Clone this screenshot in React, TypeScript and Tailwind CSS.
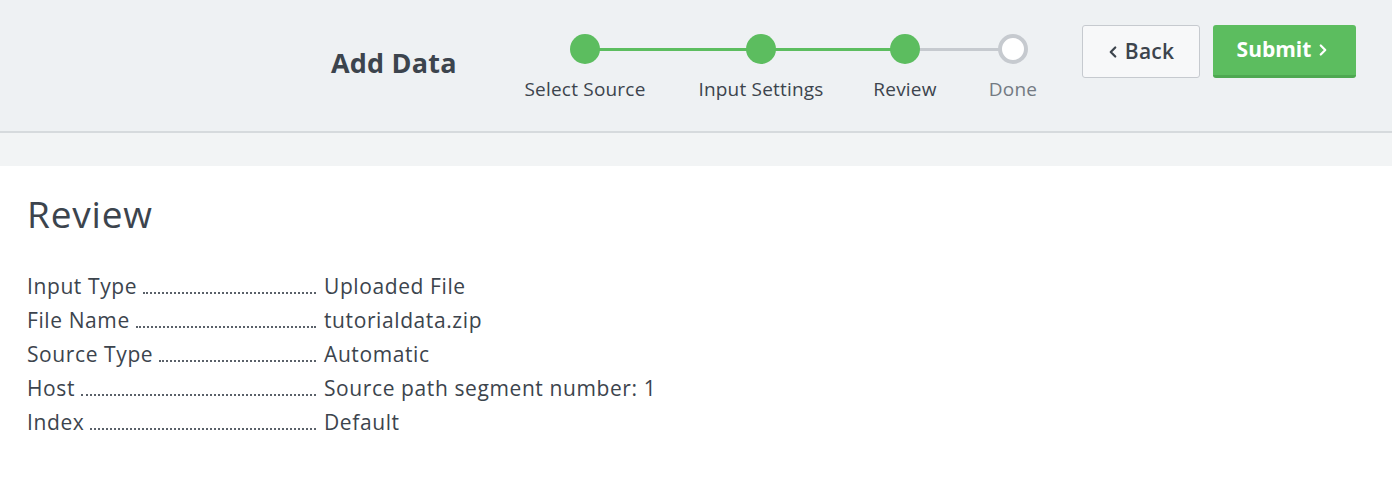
import { ChevronLeft, ChevronRight } from "lucide-react";

const steps = [
  { label: "Select Source", x: 585, done: true },
  { label: "Input Settings", x: 761, done: true },
  { label: "Review", x: 905, done: true },
  { label: "Done", x: 1013, done: false },
];

const rows = [
  ["Input Type", "Uploaded File"],
  ["File Name", "tutorialdata.zip"],
  ["Source Type", "Automatic"],
  ["Host", "Source path segment number: 1"],
  ["Index", "Default"],
];

function Stepper() {
  return (
    <div className="relative h-[100px] w-[557px]">
      {/* connecting lines */}
      <div className="absolute left-[60px] top-[22px] h-[3px] w-[320px] bg-[#5cbd5f]" />
      <div className="absolute left-[380px] top-[22px] h-[3px] w-[108px] bg-[#c6cacf]" />
      {steps.map((s) => (
        <div
          key={s.label}
          className="absolute top-[8px] flex w-[170px] -translate-x-1/2 flex-col items-center"
          style={{ left: s.x - 525 }}
        >
          {s.done ? (
            <div className="h-[30px] w-[30px] rounded-full bg-[#5cbd5f]" />
          ) : (
            <div className="h-[30px] w-[30px] rounded-full border-[4px] border-[#c6cacf] bg-white" />
          )}
          <span
            className={`mt-[12px] whitespace-nowrap text-[19px] leading-[26px] tracking-[0.2px] ${
              s.done ? "text-[#3c444d]" : "text-[#737a82]"
            }`}
          >
            {s.label}
          </span>
        </div>
      ))}
    </div>
  );
}

export default function App() {
  return (
    <div
      className="h-[496px] w-[1392px] overflow-hidden bg-white"
      style={{ fontFamily: "'Open Sans', Lato, sans-serif" }}
    >
      <header className="flex h-[133px] items-start border-b-[2px] border-[#d6dadd] bg-[#eef1f3] shadow-[0_1px_3px_rgba(0,0,0,0.08)]">
        <div className="ml-[331px] mt-[44px] w-[194px] shrink-0">
          <h1 className="whitespace-nowrap text-[27px] font-bold leading-[38px] tracking-[0.2px] text-[#3c444d]">
            Add Data
          </h1>
        </div>
        <div className="mt-[26px] shrink-0">
          <Stepper />
        </div>
        <div className="mt-[25px] flex gap-[13px]">
          <button className="flex h-[53px] w-[118px] items-center justify-center rounded-[3px] border border-[#c6cacf] bg-[#f7f8f9] text-[21px] font-semibold tracking-[0.2px] text-[#3c444d]">
            <ChevronLeft size={18} strokeWidth={3} className="-ml-1 mr-[3px]" />
            Back
          </button>
          <button className="flex h-[53px] w-[143px] items-center justify-center rounded-[3px] border-b-[3px] border-[#4ea851] bg-[#5cbd5f] text-[21px] font-bold text-white">
            Submit
            <ChevronRight size={18} strokeWidth={3} className="ml-[3px]" />
          </button>
        </div>
      </header>
      <div className="h-[33px] bg-[#f2f4f5]" />
      <main className="px-[27px] pt-[24px]">
        <h2 className="text-[37px] leading-[48px] tracking-[0.8px] text-[#3c444d]">Review</h2>
        <dl className="mt-[32px] flex flex-col">
          {rows.map(([k, v]) => (
            <div key={k} className="flex h-[34px] items-center text-[21px] tracking-[0.6px] text-[#3c444d]">
              {/* label with dot leader */}
              <dt className="flex w-[291px] shrink-0 items-baseline whitespace-nowrap">
                <span>{k}</span>
                <span className="ml-[6px] mr-[2px] flex-1 border-b-[2px] border-dotted border-[#5a6169]" />
              </dt>
              <dd className="ml-[6px] whitespace-nowrap">{v}</dd>
            </div>
          ))}
        </dl>
      </main>
    </div>
  );
}
